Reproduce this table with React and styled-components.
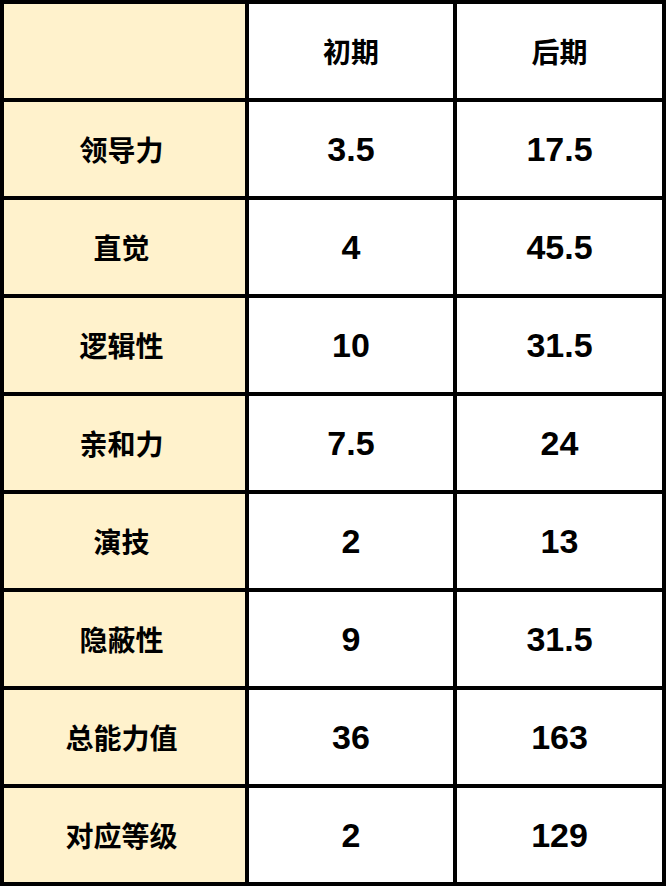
import React from 'react';
import styled, { createGlobalStyle } from 'styled-components';

const GlobalStyle = createGlobalStyle`
  html, body {
    margin: 0;
    padding: 0;
    background: #ffffff;
  }
`;

const Table = styled.div`
  display: grid;
  grid-template-columns: 241px 204px 205px;
  grid-auto-rows: 94px;
  gap: 4px;
  padding: 4px;
  width: max-content;
  background: #000000;
`;

const Cell = styled.div`
  display: flex;
  align-items: center;
  justify-content: center;
  background: ${(p) => (p.label ? '#fff2cc' : '#ffffff')};
  color: #000000;
  font-weight: 700;
  font-family: ${(p) =>
    p.num
      ? '"Liberation Sans", Arial, sans-serif'
      : '"Noto Sans CJK SC", "Noto Sans", sans-serif'};
  font-size: ${(p) => (p.num ? '34px' : '28px')};
  padding-right: ${(p) => (p.label ? '6px' : '0')};
`;

const rows = [
  ['领导力', '3.5', '17.5'],
  ['直觉', '4', '45.5'],
  ['逻辑性', '10', '31.5'],
  ['亲和力', '7.5', '24'],
  ['演技', '2', '13'],
  ['隐蔽性', '9', '31.5'],
  ['总能力值', '36', '163'],
  ['对应等级', '2', '129'],
];

function App() {
  return (
    <>
      <GlobalStyle />
      <Table>
        <Cell label />
        <Cell>初期</Cell>
        <Cell>后期</Cell>
        {rows.map((r) => (
          <React.Fragment key={r[0]}>
            <Cell label>{r[0]}</Cell>
            <Cell num>{r[1]}</Cell>
            <Cell num>{r[2]}</Cell>
          </React.Fragment>
        ))}
      </Table>
    </>
  );
}

export default App;
